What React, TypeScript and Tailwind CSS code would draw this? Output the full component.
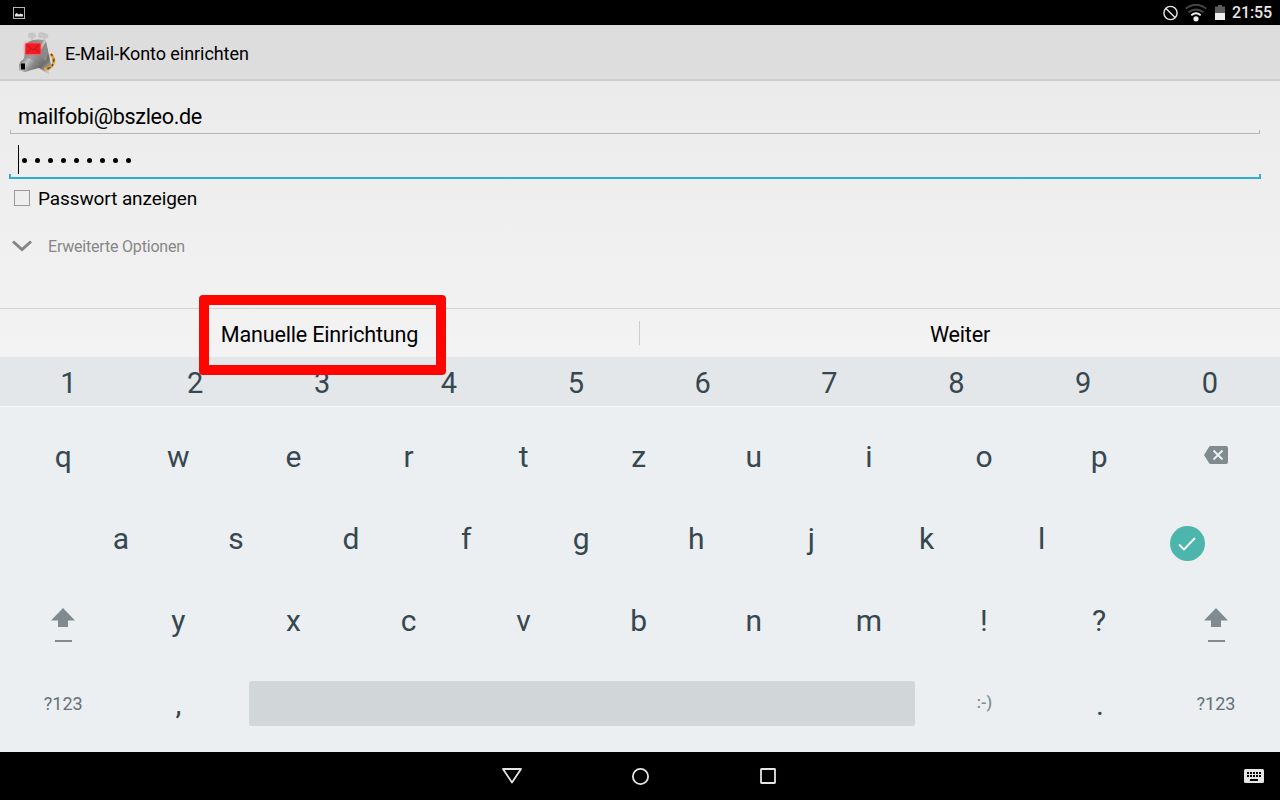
import type { ReactNode } from 'react';

const digits = ['1', '2', '3', '4', '5', '6', '7', '8', '9', '0'];
const topLetters = ['q', 'w', 'e', 'r', 't', 'z', 'u', 'i', 'o', 'p'];
const homeLetters = ['a', 's', 'd', 'f', 'g', 'h', 'j', 'k', 'l'];
const bottomLetters = ['y', 'x', 'c', 'v', 'b', 'n', 'm', '!', '?'];

function Key({ children, width = 'w-[115.1px]', className = '' }: { children: ReactNode; width?: string; className?: string }) {
  return (
    <button type="button" className={`flex h-full shrink-0 items-center justify-center ${width} ${className}`}>
      {children}
    </button>
  );
}

function MailDogIcon() {
  return (
    <svg width="44" height="46" viewBox="0 0 44 46" className="mt-[3px] shrink-0">
      <defs>
        <linearGradient id="fur" x1="0" y1="0" x2="1" y2="1">
          <stop offset="0" stopColor="#777" />
          <stop offset="0.45" stopColor="#a0a0a0" />
          <stop offset="0.75" stopColor="#6c6c6c" />
          <stop offset="1" stopColor="#c9c9c9" />
        </linearGradient>
        <linearGradient id="muzzle" x1="0" y1="0" x2="1" y2="0.5">
          <stop offset="0" stopColor="#666" />
          <stop offset="0.45" stopColor="#c4c4c4" />
          <stop offset="1" stopColor="#666" stopOpacity="0" />
        </linearGradient>
        <filter id="glow" x="-40%" y="-40%" width="180%" height="180%">
          <feGaussianBlur stdDeviation="1.6" />
        </filter>
      </defs>
      <g fill="#c6c6c6">
        <ellipse cx="15" cy="4.500" rx="4" ry="3" />
        <ellipse cx="24.500" cy="4" rx="3.500" ry="3" />
        <circle cx="28.500" cy="5" r="2.800" />
        <path d="M14 7h2v3h-2zM26 7h2v3h-2z" />
      </g>
      <path d="M9 14Q11 9 21 8.500L28 9 29 12 32 24 34 34Q34 39 29 41.500L22 37 14 39 8 41 2 39V34L7 27Z" fill="url(#fur)" />
      <path d="M4 30Q10 25 16 29L22 37 14 39 8 41 2 39V34Z" fill="url(#muzzle)" />
      <path d="M24 13L29 10 31 20 29 31 24 25Z" fill="#8a8a8a" />
      <path d="M27 9L29.500 10 24 19 23 16Z" fill="#c0c0c0" />
      <path d="M27 40l4-1.500 1 5z" fill="#c4c4c4" />
      <path d="M33.500 23Q38.500 28 36 33Q34 38 27 38" fill="none" stroke="#d9a536" strokeWidth="2.800" />
      <path d="M34 23Q38.500 28 36 33Q34 38 27 38" fill="none" stroke="#a62d16" strokeWidth="1.800" strokeDasharray="2 3.500" />
      <path d="M36.500 29v2M33.500 36l-1.500 1" stroke="#426637" strokeWidth="1.500" />
      <rect x="8" y="12" width="16" height="11.500" fill="#ff4747" opacity=".8" filter="url(#glow)" />
      <rect x="8.500" y="12.500" width="15" height="10.500" fill="#fa1821" />
      <path d="M10 14L16 19 22 14M10 21.500L14 17.500M22 21.500L18 17.500" fill="none" stroke="#98232a" strokeWidth="1" />
      <path d="M4 32.500H8V38.500H4Z" fill="#000" />
    </svg>
  );
}

function ShiftIcon() {
  return (
    <svg width="24" height="36" viewBox="0 0 24 36" className="mt-[9px]">
      <path d="M12 0L24 12.500H17V19H7V12.500H0Z" fill="#808b8f" />
      <rect x="4" y="32" width="17" height="2" fill="#808b8f" />
    </svg>
  );
}

function StatusBar() {
  return (
    <div className="flex h-[25px] items-center bg-black pl-3 pr-2">
      <svg width="14" height="13" viewBox="0 0 14 13">
        <rect x="1.500" y="1.500" width="11" height="11" fill="none" stroke="#b4b4b4" strokeWidth="1" />
        <path d="M3 10.500V8.500L4.500 7 7 8.500 8.500 7.500 11 8.500V10.500Z" fill="#e6e6e6" />
      </svg>
      <div className="ml-auto flex items-center">
        <svg width="16" height="16" viewBox="0 0 16 16" fill="none" stroke="#e6e6e6" strokeWidth="1.400">
          <circle cx="8.500" cy="8" r="6.600" />
          <path d="M4 3.500L13 12.500" />
        </svg>
        <svg width="22" height="18" viewBox="0 0 22 18" fill="none" className="ml-[7px]">
          <path d="M.7 4.800Q11-3.200 21.300 4.800" stroke="#474747" strokeWidth="1.900" />
          <path d="M3.600 8.300Q11 2.500 18.400 8.300" stroke="#474747" strokeWidth="1.900" />
          <path d="M6.300 11.300Q11 7.400 15.700 11.300" stroke="#f0f0f0" strokeWidth="1.900" />
          <circle cx="11" cy="14.800" r="2.600" fill="#f0f0f0" />
        </svg>
        <svg width="10" height="16" viewBox="0 0 10 16" className="ml-2">
          <path d="M3 0H7V1.500H10V8H0V1.500H3Z" fill="#5c5c5c" />
          <path d="M0 8H10V15H0Z" fill="#eee" />
        </svg>
        <span className="ml-[7px] w-[40px] whitespace-nowrap text-[16px] font-medium leading-[25px] tracking-[-0.1px] text-[#e6e6e6]">21:55</span>
      </div>
    </div>
  );
}

function SetupForm() {
  return (
    <main className="flex h-[227px] flex-col pl-[9px] pr-[19px]">
      <div className="flex h-[49px] items-end pl-[9px]">
        <span className="text-[21.600px] leading-[26px] tracking-[-0.34px]">mailfobi@bszleo.de</span>
      </div>
      <div className="mx-px h-1 border-x border-b border-[#b5b5b5]" />
      <div className="flex h-[40px] items-end pl-[9px]">
        <div className="flex h-[29px] items-center border-l border-black pl-[3px] pt-[2px]">
          <div className="flex gap-[8px]">
            {Array.from({ length: 9 }, (_, i) => (
              <span key={i} className="h-[5px] w-[5px] rounded-full bg-black" />
            ))}
          </div>
        </div>
      </div>
      <div className="h-[5px] w-[1252px] border-x-2 border-b-2 border-[#33aad8]" />
      <div className="flex h-[38px] items-center pl-[5px]">
        <span className="h-4 w-4 border border-[#999]" />
        <span className="ml-2 pt-[3px] text-[19px] tracking-[-0.1px]">Passwort anzeigen</span>
      </div>
      <div className="mt-[9px] flex h-10 items-center pl-[3px] text-[#878787]">
        <svg width="20" height="12" viewBox="0 0 20 12" fill="none" stroke="#858585" strokeWidth="3">
          <path d="M1 1.500L10 9.500 19 1.500" />
        </svg>
        <span className="ml-4 pt-[2px] text-[16px] tracking-[-0.2px]">Erweiterte Optionen</span>
      </div>
    </main>
  );
}

function Keyboard() {
  return (
    <section className="h-[395px] bg-[#ebeff2] text-[30px] leading-none text-[#37474f]">
      <div className="flex h-[50px] border-b border-[#f5f8fa] bg-[#e3e7ea] pl-[5px] pr-[6.500px]">
        {digits.map((d) => (
          <button type="button" key={d} className="flex flex-1 items-center justify-center pt-[3px] text-[29px]">{d}</button>
        ))}
      </div>
      <div className="flex flex-col pl-[5.700px] pr-[4px] pt-[9px]">
        <div className="flex h-[82px]">
          {topLetters.map((k) => <Key key={k}>{k}</Key>)}
          <Key width="flex-1">
            <svg width="24" height="18" viewBox="0 0 24 18" className="-mt-1">
              <path d="M6.500 0H22Q24 0 24 2V16Q24 18 22 18H6.500Q5.500 18 5 17L0 9 5 1Q5.500 0 6.500 0Z" fill="#808b8f" />
              <path d="M9.500 4.500L18.500 13.500M18.500 4.500L9.500 13.500" stroke="#ebeff2" strokeWidth="2" />
            </svg>
          </Key>
        </div>
        <div className="flex h-[82px] pl-[57.600px] pr-[1px]">
          {homeLetters.map((k) => <Key key={k}>{k}</Key>)}
          <Key width="flex-1">
            <span className="mt-[9px] flex h-[35px] w-[35px] items-center justify-center rounded-full bg-[#4db6ac]">
              <svg width="18" height="14" viewBox="0 0 18 14" fill="none" stroke="#fff" strokeWidth="1.900">
                <path d="M1 7.500L6 12.500 17 1" />
              </svg>
            </span>
          </Key>
        </div>
        <div className="flex h-[82px]">
          <Key><ShiftIcon /></Key>
          {bottomLetters.map((k) => <Key key={k}>{k}</Key>)}
          <Key width="flex-1"><ShiftIcon /></Key>
        </div>
        <div className="flex h-[82px]">
          <Key className="pt-[2px] text-[18px] text-[#647178]">?123</Key>
          <Key className="pt-[2px]">,</Key>
          <div className="flex w-[691px] items-center pl-[13.100px] pr-[11.900px]">
            <button type="button" aria-label="Leerzeichen" className="h-[45px] w-full rounded-[3px] bg-[#d1d6d9]" />
          </div>
          <Key className="text-[16px] font-medium text-[#808b8f]">:-)</Key>
          <Key className="pl-px pt-[4px]">.</Key>
          <Key width="flex-1" className="pr-px pt-[2px] text-[18px] text-[#647178]">?123</Key>
        </div>
      </div>
    </section>
  );
}

function NavigationBar() {
  return (
    <nav className="flex h-12 items-center bg-black">
      <div className="flex flex-1 items-center pl-[501px]">
        <svg width="22" height="18" viewBox="0 0 22 18" fill="none" stroke="#e2e5e5" strokeWidth="1.800">
          <path d="M2 2H20L11 15.500Z" strokeLinejoin="round" />
        </svg>
        <svg width="18" height="18" viewBox="0 0 18 18" fill="none" stroke="#e2e5e5" strokeWidth="1.800" className="ml-[109px]">
          <circle cx="8.500" cy="9.500" r="7.600" />
        </svg>
        <svg width="16" height="16" viewBox="0 0 16 16" fill="none" stroke="#e2e5e5" strokeWidth="1.800" className="ml-[110px]">
          <rect x="1" y="1" width="14" height="14" rx=".5" />
        </svg>
      </div>
      <svg width="20" height="14" viewBox="0 0 20 14" className="mr-4">
        <rect width="20" height="14" rx="1.500" fill="#e5e5e5" />
        <path d="M3 4H17M3 7H17" stroke="#000" strokeWidth="2" strokeDasharray="2 1" />
        <path d="M6 11H14" stroke="#000" strokeWidth="2" />
      </svg>
    </nav>
  );
}

export default function App() {
  return (
    <div className="flex h-[800px] w-[1280px] flex-col overflow-hidden bg-linear-to-b from-[#e9e9e9] to-[#f3f3f3] to-45% font-['Roboto',sans-serif] text-black">
      <StatusBar />
      <header className="flex h-[56px] items-center border-b-2 border-[#cecece] bg-[#ddd] pl-[17px]">
        <MailDogIcon />
        <h1 className="ml-1 pt-[3px] text-[18px] tracking-[-0.06px]">E-Mail-Konto einrichten</h1>
      </header>
      <SetupForm />
      <div className="flex h-[49px] items-center border-t border-[#d3d3d3] text-[21.600px] tracking-[-0.2px]">
        <div className="relative flex h-full w-[639px] items-center justify-center pt-[4px]">
          Manuelle Einrichtung
          <div className="absolute -top-[14px] left-[199px] z-10 h-[80px] w-[247px] rounded-[4px] border-10 border-[#ff0500]" />
        </div>
        <div className="h-6 w-px bg-[#cecece]" />
        <button type="button" className="flex-1 pt-[4px]">Weiter</button>
      </div>
      <Keyboard />
      <NavigationBar />
    </div>
  );
}
